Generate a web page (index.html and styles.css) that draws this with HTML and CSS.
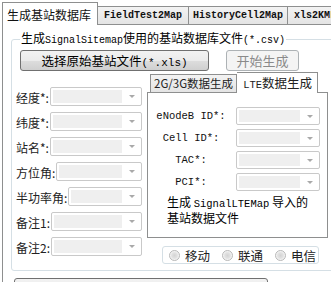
FILE: index.html
```html
<!DOCTYPE html>
<html lang="zh-CN">
<head>
    <meta charset="UTF-8">
    <title>生成基站数据库</title>
    <link rel="stylesheet" href="styles.css">
</head>
<body>
    <div class="window">

        <!-- Top tab strip -->
        <div class="tabs">
            <div class="tab active">生成基站数据库</div>
            <div class="tab mono">FieldTest2Map</div>
            <div class="tab mono tight">HistoryCell2Map</div>
            <div class="tab mono">xls2KML</div>
        </div>

        <div class="page">
            <fieldset class="group">
                <legend>生成<span class="mono">SignalSitemap</span>使用的基站数据库文件<span class="mono">(*.csv)</span></legend>

                <div class="button-row">
                    <button class="btn btn-pick">选择原始基站文件<span class="mono">(*.xls)</span></button>
                    <button class="btn btn-start" disabled>开始生成</button>
                </div>

                <div class="main-row">
                    <!-- Left: column mapping -->
                    <div class="fields">
                        <div class="field"><span class="label">经度*:</span><span class="combo"><i></i></span></div>
                        <div class="field"><span class="label">纬度*:</span><span class="combo"><i></i></span></div>
                        <div class="field"><span class="label">站名*:</span><span class="combo"><i></i></span></div>
                        <div class="field"><span class="label">方位角:</span><span class="combo"><i></i></span></div>
                        <div class="field"><span class="label">半功率角:</span><span class="combo"><i></i></span></div>
                        <div class="field"><span class="label">备注1:</span><span class="combo"><i></i></span></div>
                        <div class="field"><span class="label">备注2:</span><span class="combo"><i></i></span></div>
                    </div>

                    <!-- Right: inner tabs -->
                    <div class="inner">
                        <div class="inner-tabs">
                            <div class="itab">2G/3G数据生成</div>
                            <div class="itab active"><span class="mono">LTE</span>数据生成</div>
                        </div>
                        <div class="pane">
                            <div class="lte-row"><span class="lte-label mono">eNodeB ID*:</span><span class="combo"><i></i></span></div>
                            <div class="lte-row"><span class="lte-label mono">Cell ID*:</span><span class="combo"><i></i></span></div>
                            <div class="lte-row"><span class="lte-label mono">TAC*:</span><span class="combo"><i></i></span></div>
                            <div class="lte-row"><span class="lte-label mono">PCI*:</span><span class="combo"><i></i></span></div>
                            <p class="note">生成 <span class="mono">SignalLTEMap</span> 导入的<br>基站数据文件</p>
                        </div>
                        <div class="radios">
                            <span class="radio"><i></i>移动</span>
                            <span class="radio"><i></i>联通</span>
                            <span class="radio"><i></i>电信</span>
                        </div>
                    </div>
                </div>
            </fieldset>

            <button class="btn btn-bottom"></button>
        </div>
    </div>
</body>
</html>
```

FILE: styles.css
```css
html, body {
    margin: 0;
    height: 100%;
    overflow: hidden;
}

body {
    background-color: #fff;
    color: #000;
    font-family: "Noto Sans CJK SC", "Noto Sans", sans-serif;
    font-size: 12px;
}

.mono {
    font-family: "Liberation Mono", "DejaVu Sans Mono", monospace;
    font-size: 10px;
}

.window {
    width: 400px;
}

/* top tab strip */
.tabs {
    display: flex;
    align-items: flex-end;
    height: 24px;
    padding-left: 2px;
}

.tab {
    height: 17px;
    line-height: 18px;
    padding: 0 6px;
    border: 1px solid #8e8f8f;
    border-bottom: none;
    margin-left: -1px;
    background: linear-gradient(#f3f3f3, #e4e4e4);
    color: #111;
    white-space: nowrap;
}

.tab.mono {
    font-weight: bold;
}

.tab.tight {
    padding: 0 4px;
}

.tab.active {
    position: relative;
    height: 22px;
    line-height: 24px;
    margin-left: 0;
    margin-bottom: -1px;
    padding: 0 6px 0 4px;
    background: #fff;
    font-size: 12px;
    z-index: 1;
}

.page {
    margin-left: 2px;
    height: 270px;
    border: 1px solid #8e8f8f;
    background: #fff;
}

/* group box */
.group {
    margin: 5px 0 0 8px;
    padding: 0 0 8px 3px;
    width: 360px;
    height: 241px;
    border: 1px solid #d5dfe5;
    border-radius: 3px;
    box-sizing: border-box;
}

.group legend {
    margin-left: 5px;
    padding: 0 1px;
    line-height: 16px;
    white-space: nowrap;
}

.button-row {
    display: flex;
    margin: 1px 0 0 5px;
}

.btn {
    height: 21px;
    padding: 0;
    border: 1px solid #707070;
    border-radius: 3px;
    background: linear-gradient(#f2f2f2 0%, #ebebeb 50%, #dddddd 51%, #cfcfcf 100%);
    font-family: "Noto Sans CJK SC", "Noto Sans", sans-serif;
    font-size: 12.5px;
    color: #000;
    white-space: nowrap;
}

.btn .mono {
    font-size: 11px;
}

.btn-pick {
    width: 189px;
}

.btn-start {
    width: 73px;
    margin-left: 17px;
    border-color: #adb2b5;
    background: #f4f4f4;
    color: #8a8a8a;
    font-size: 13px;
}

.btn-bottom {
    display: block;
    width: 254px;
    margin: 7px 0 0 11px;
}

.main-row {
    display: flex;
    margin-top: 1px;
}

/* left column */
.fields {
    width: 127px;
    padding-top: 15px;
    display: flex;
    flex-direction: column;
    gap: 6px;
}

.field {
    display: flex;
    align-items: center;
    height: 19px;
}

.label {
    padding: 2px 0 0 1px;
    line-height: 15px;
    white-space: nowrap;
    color: #222;
}

.combo {
    flex: 1;
    display: flex;
    align-items: center;
    justify-content: flex-end;
    height: 19px;
    margin-left: 1px;
    border: 1px solid #c9c9c9;
    border-radius: 2px;
    box-sizing: border-box;
    background: #fff;
    background-image: linear-gradient(#efefef, #efefef);
    background-repeat: no-repeat;
    background-position: 2px 2px;
    background-size: calc(100% - 21px) 13px;
}

.combo i {
    width: 0;
    height: 0;
    margin-right: 6px;
    border-left: 3px solid transparent;
    border-right: 3px solid transparent;
    border-top: 3px solid #a9a9a9;
}

/* right column */
.inner {
    margin-left: 5px;
}

.inner-tabs {
    display: flex;
    align-items: flex-end;
    height: 20px;
    padding-left: 3px;
}

.itab {
    height: 17px;
    line-height: 17px;
    padding: 0 3px;
    border: 1px solid #8e8f8f;
    border-bottom: none;
    background: linear-gradient(#f3f3f3, #e4e4e4);
    color: #222;
    font-size: 11.5px;
    white-space: nowrap;
}

.itab.active {
    position: relative;
    height: 20px;
    line-height: 20px;
    margin-bottom: -1px;
    border-left: none;
    padding: 0 5px 0 6px;
    background: #fff;
    font-size: 12.5px;
    z-index: 1;
}

.itab.active .mono {
    font-size: 10.5px;
}

.pane {
    width: 181px;
    height: 146px;
    border: 1px solid #8e8f8f;
    box-sizing: border-box;
    padding-top: 14px;
}

.lte-row {
    display: flex;
    align-items: center;
    height: 18px;
    margin-bottom: 4px;
}

.lte-label {
    width: 84px;
    text-align: center;
    padding-left: 2px;
    box-sizing: border-box;
    color: #111;
    font-size: 10.5px;
}

.lte-row .combo {
    flex: none;
    width: 84px;
    height: 18px;
    margin-left: 4px;
    background-size: calc(100% - 21px) 12px;
}

.note {
    margin: 4px 0 0 19px;
    line-height: 13px;
    font-size: 12px;
}

.note .mono {
    font-size: 10.5px;
}

.radios {
    display: flex;
    align-items: center;
    width: 157px;
    height: 18px;
    margin: 8px 0 0 15px;
    border: 1px solid #d5dfe5;
    border-radius: 3px;
    box-sizing: border-box;
    padding-left: 6px;
    gap: 12px;
}

.radio {
    flex: none;
    display: flex;
    align-items: center;
    gap: 5px;
    font-size: 12.5px;
    color: #222;
    white-space: nowrap;
}

.radio i {
    width: 9px;
    height: 9px;
    border: 1px solid #b8b8b8;
    border-radius: 50%;
    background: radial-gradient(circle, #d4d4d4 0%, #e2e2e2 45%, #f6f6f6 70%);
}
```
